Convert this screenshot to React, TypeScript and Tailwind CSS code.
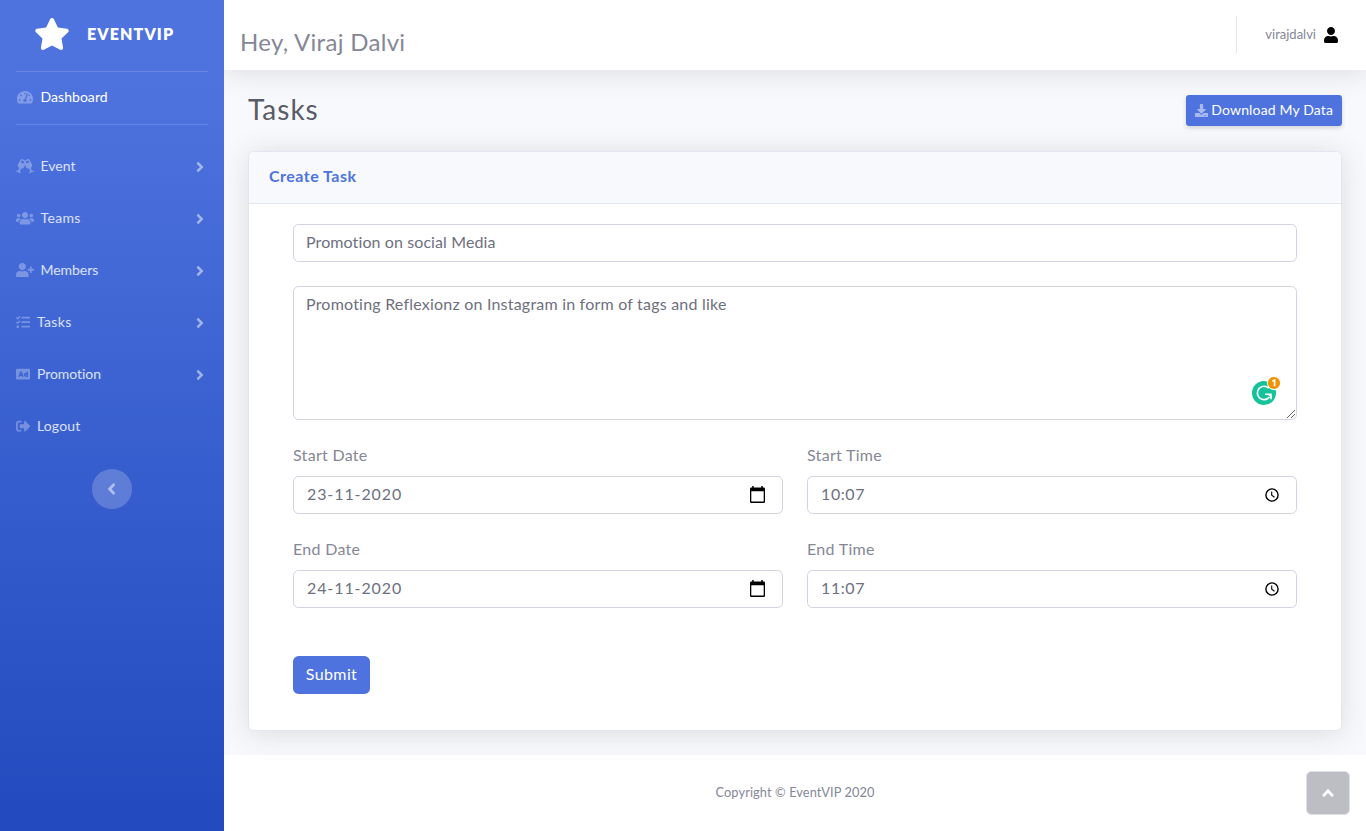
import React from "react";
import {
  FaAd,
  FaAngleLeft,
  FaAngleRight,
  FaAngleUp,
  FaDownload,
  FaGlassCheers,
  FaSignOutAlt,
  FaStar,
  FaTachometerAlt,
  FaTasks,
  FaUser,
  FaUserPlus,
  FaUsers,
} from "react-icons/fa";
import type { IconType } from "react-icons";

type NavItem = {
  label: string;
  Icon: IconType;
  iconClass: string;
  labelClass: string;
  arrow: boolean;
};

const navItems: NavItem[] = [
  { label: "Event", Icon: FaGlassCheers, iconClass: "w-[18px]", labelClass: "ml-[6.5px]", arrow: true },
  { label: "Teams", Icon: FaUsers, iconClass: "w-[18px]", labelClass: "ml-[6.5px] tracking-[0.35px]", arrow: true },
  { label: "Members", Icon: FaUserPlus, iconClass: "w-[18px]", labelClass: "ml-[6.5px] tracking-[-0.05px]", arrow: true },
  { label: "Tasks", Icon: FaTasks, iconClass: "w-[14.4px]", labelClass: "ml-[6.6px] tracking-[0.35px]", arrow: true },
  { label: "Promotion", Icon: FaAd, iconClass: "w-[14.4px]", labelClass: "ml-[6.600px] tracking-[-0.05px]", arrow: true },
  { label: "Logout", Icon: FaSignOutAlt, iconClass: "w-[14.4px]", labelClass: "ml-[6.6px] tracking-[0.15px]", arrow: false },
];

function Sidebar() {
  return (
    <aside className="flex w-[224px] shrink-0 flex-col bg-[linear-gradient(180deg,#4e73df_10%,#224abe_100%)] text-white">
      <div className="flex h-[71px] items-center pb-[3px] pl-[34px]">
        <FaStar className="h-8 w-9 shrink-0" />
        <span className="ml-[17px] text-[16px] font-extrabold tracking-[1.1px]">EVENTVIP</span>
      </div>
      <div className="mx-4 h-px bg-white/15" />
      <a className="flex h-[52px] items-center px-4 pb-[3px] text-[14px]">
        <FaTachometerAlt className="mt-px h-[14.4px] w-[18px] shrink-0 text-white/30" />
        <span className="ml-[6.5px] tracking-[0.05px]">Dashboard</span>
      </a>
      <div className="mx-4 mb-4 h-px bg-white/15" />
      <nav className="flex flex-col">
        {navItems.map(({ label, Icon, iconClass, labelClass, arrow }) => (
          <a key={label} className="flex h-[52px] items-center px-4 pb-[3px] text-[14px] text-white/80">
            <Icon className={`mt-px h-[14.4px] shrink-0 text-white/30 ${iconClass}`} />
            <span className={labelClass}>{label}</span>
            {arrow && <FaAngleRight className="mt-[3px] mr-[3px] ml-auto h-4 w-[10px] text-white/50" />}
          </a>
        ))}
      </nav>
      <button className="mt-4 flex size-10 items-center justify-center self-center rounded-full bg-white/20">
        <FaAngleLeft className="mr-px h-[18px] w-[11px] text-white/50" />
      </button>
    </aside>
  );
}

function Topbar() {
  return (
    <header className="relative flex h-[70px] shrink-0 items-center bg-white pr-7 pl-4 text-[#858796] shadow-[0_2.4px_28px_0_rgba(58,59,69,0.15)]">
      <h1 className="mt-[13px] text-[24px] leading-[29px] tracking-[0.3px]">Hey, Viraj Dalvi</h1>
      <div className="ml-auto h-[38px] w-px bg-[#e3e6f0]" />
      <span className="ml-[28px] text-[13px]">virajdalvi</span>
      <FaUser className="ml-[8px] h-4 w-[14px] text-black" />
    </header>
  );
}

function CalendarIcon() {
  return (
    <svg viewBox="0 0 15 17" className="h-[17px] w-[15px] text-black">
      <path
        fillRule="evenodd"
        fill="currentColor"
        d="M2.200 0h1.500v1.500h7.600V0h1.500v1.500h1A1.200 1.200 0 0 1 15 2.700v13a1.200 1.200 0 0 1-1.200 1.200H1.200A1.200 1.200 0 0 1 0 15.700v-13A1.200 1.200 0 0 1 1.200 1.500h1zM1.300 5.200v10.300h12.400V5.200z"
      />
    </svg>
  );
}

function ClockIcon() {
  return (
    <svg viewBox="0 0 14 14" className="h-[14px] w-[14px] text-black" fill="none" stroke="currentColor">
      <circle cx="7" cy="7" r="6.1" strokeWidth="1.4" />
      <path d="M6.7 3.6v3.7l2.8 2" strokeWidth="1.1" />
    </svg>
  );
}

function Field({ label, value, kind }: { label: string; value: string; kind: "date" | "time" }) {
  return (
    <div className="flex flex-col">
      <label className="-mt-px mb-[9px] text-[16px] leading-6 tracking-[0.3px]">{label}</label>
      <div className="flex h-[38px] items-center justify-between rounded-[5.6px] border border-[#d1d3e2] bg-white pl-[13px] text-[16px] text-[#6e707e]">
        <span className={kind === "date" ? "mb-[2px] tracking-[0.9px]" : "mb-[2px] tracking-[0.6px]"}>{value}</span>
        {kind === "date" ? (
          <span className="mr-[17px] -mt-px">
            <CalendarIcon />
          </span>
        ) : (
          <span className="mr-[17px]">
            <ClockIcon />
          </span>
        )}
      </div>
    </div>
  );
}

function AssistantBadge() {
  return (
    <svg viewBox="0 0 30 30" className="absolute right-[15px] bottom-[13px] h-[30px] w-[30px]">
      <circle cx="13" cy="17" r="12" fill="#15c39a" />
      <path d="M17.8 12.2a6.7 6.7 0 1 0 .6 8.800" fill="none" stroke="#fff" strokeWidth="1.7" />
      <path d="M14 18.300h6v5" fill="none" stroke="#fff" strokeWidth="1.600" />
      <path d="M16.500 18.300h3.500v3.500z" fill="#fff" />
      <circle cx="23" cy="7" r="7" fill="#fff" />
      <circle cx="23" cy="7" r="6.1" fill="#f29100" />
      <path d="M21.300 5.300l2.300-1.200v6.200" fill="none" stroke="#fff" strokeWidth="1.7" />
    </svg>
  );
}

function ResizeGrip() {
  return (
    <svg viewBox="0 0 10 10" className="absolute right-0 bottom-0 h-[10px] w-[10px]" stroke="#555" strokeWidth="0.9">
      <path d="M1 9L9 1M5 9L9 5" fill="none" />
    </svg>
  );
}

function TaskCard() {
  return (
    <section className="relative mt-[25px] flex h-[580px] flex-col rounded-[5.6px] border border-[#e3e6f0] bg-white shadow-[0_2.4px_28px_0_rgba(58,59,69,0.15)]">
      <div className="flex h-[52px] shrink-0 items-center rounded-t-[5px] border-b border-[#e3e6f0] bg-[#f8f9fc] px-5 pb-[3px]">
        <h6 className="text-[16px] font-bold tracking-[0.48px] text-[#4e73df]">Create Task</h6>
      </div>
      <form className="flex flex-col px-[44px] pt-5">
        <div className="flex h-[38px] items-center rounded-[5.6px] border border-[#d1d3e2] px-3 pb-[2px] text-[16px] text-[#6e707e]">
          <span className="tracking-[0.1px]">Promotion on social Media</span>
        </div>
        <div className="relative mt-6 h-[134px] rounded-[5.6px] border border-[#d1d3e2] px-3 py-[5px] text-[16px] leading-6 text-[#6e707e]">
          <span className="tracking-[0.21px]">Promoting Reflexionz on Instagram in form of tags and like</span>
          <AssistantBadge />
          <ResizeGrip />
        </div>
        <div className="mt-6 grid grid-cols-2 gap-6">
          <Field label="Start Date" value="23-11-2020" kind="date" />
          <Field label="Start Time" value="10:07" kind="time" />
          <Field label="End Date" value="24-11-2020" kind="date" />
          <Field label="End Time" value="11:07" kind="time" />
        </div>
        <button type="button" className="mt-12 h-[38px] w-[77px] rounded-[5.6px] bg-[#4e73df] pb-[2px] text-[16px] tracking-[0.4px] text-white">
          Submit
        </button>
      </form>
    </section>
  );
}

export default function App() {
  return (
    <div className="relative flex h-[831px] overflow-hidden bg-[#f8f9fc] font-[Lato,'Open_Sans',sans-serif] text-[#858796]">
      <Sidebar />
      <div className="flex min-w-0 flex-1 flex-col overflow-hidden">
        <Topbar />
        <main className="h-[685px] shrink-0 px-6 pt-[25px]">
          <div className="flex h-[31px] items-center justify-between">
            <h2 className="mb-[4px] text-[28px] leading-[34px] tracking-[1px] text-[#5a5c69]">Tasks</h2>
            <button className="flex h-[31px] w-[156px] items-center justify-center rounded-[3.2px] bg-[#4e73df] text-[14px] text-white shadow-[0_2px_4px_0_rgba(58,59,69,0.2)]">
              <FaDownload className="mr-[3.5px] h-[13px] w-[13px] text-white/50" />
              <span className="mb-[2px] tracking-[0.15px]">Download My Data</span>
            </button>
          </div>
          <TaskCard />
        </main>
        <footer className="flex h-[76px] shrink-0 items-center justify-center bg-white text-[12.8px]">
          <span className="tracking-[0.1px]">Copyright © EventVIP 2020</span>
        </footer>
      </div>
      <button className="absolute right-4 bottom-4 flex size-11 items-center justify-center rounded-[5.6px] border border-[#dddfeb] bg-[#5a5c69]/40 text-white">
        <FaAngleUp className="mr-px h-[18px] w-[12px]" />
      </button>
    </div>
  );
}
